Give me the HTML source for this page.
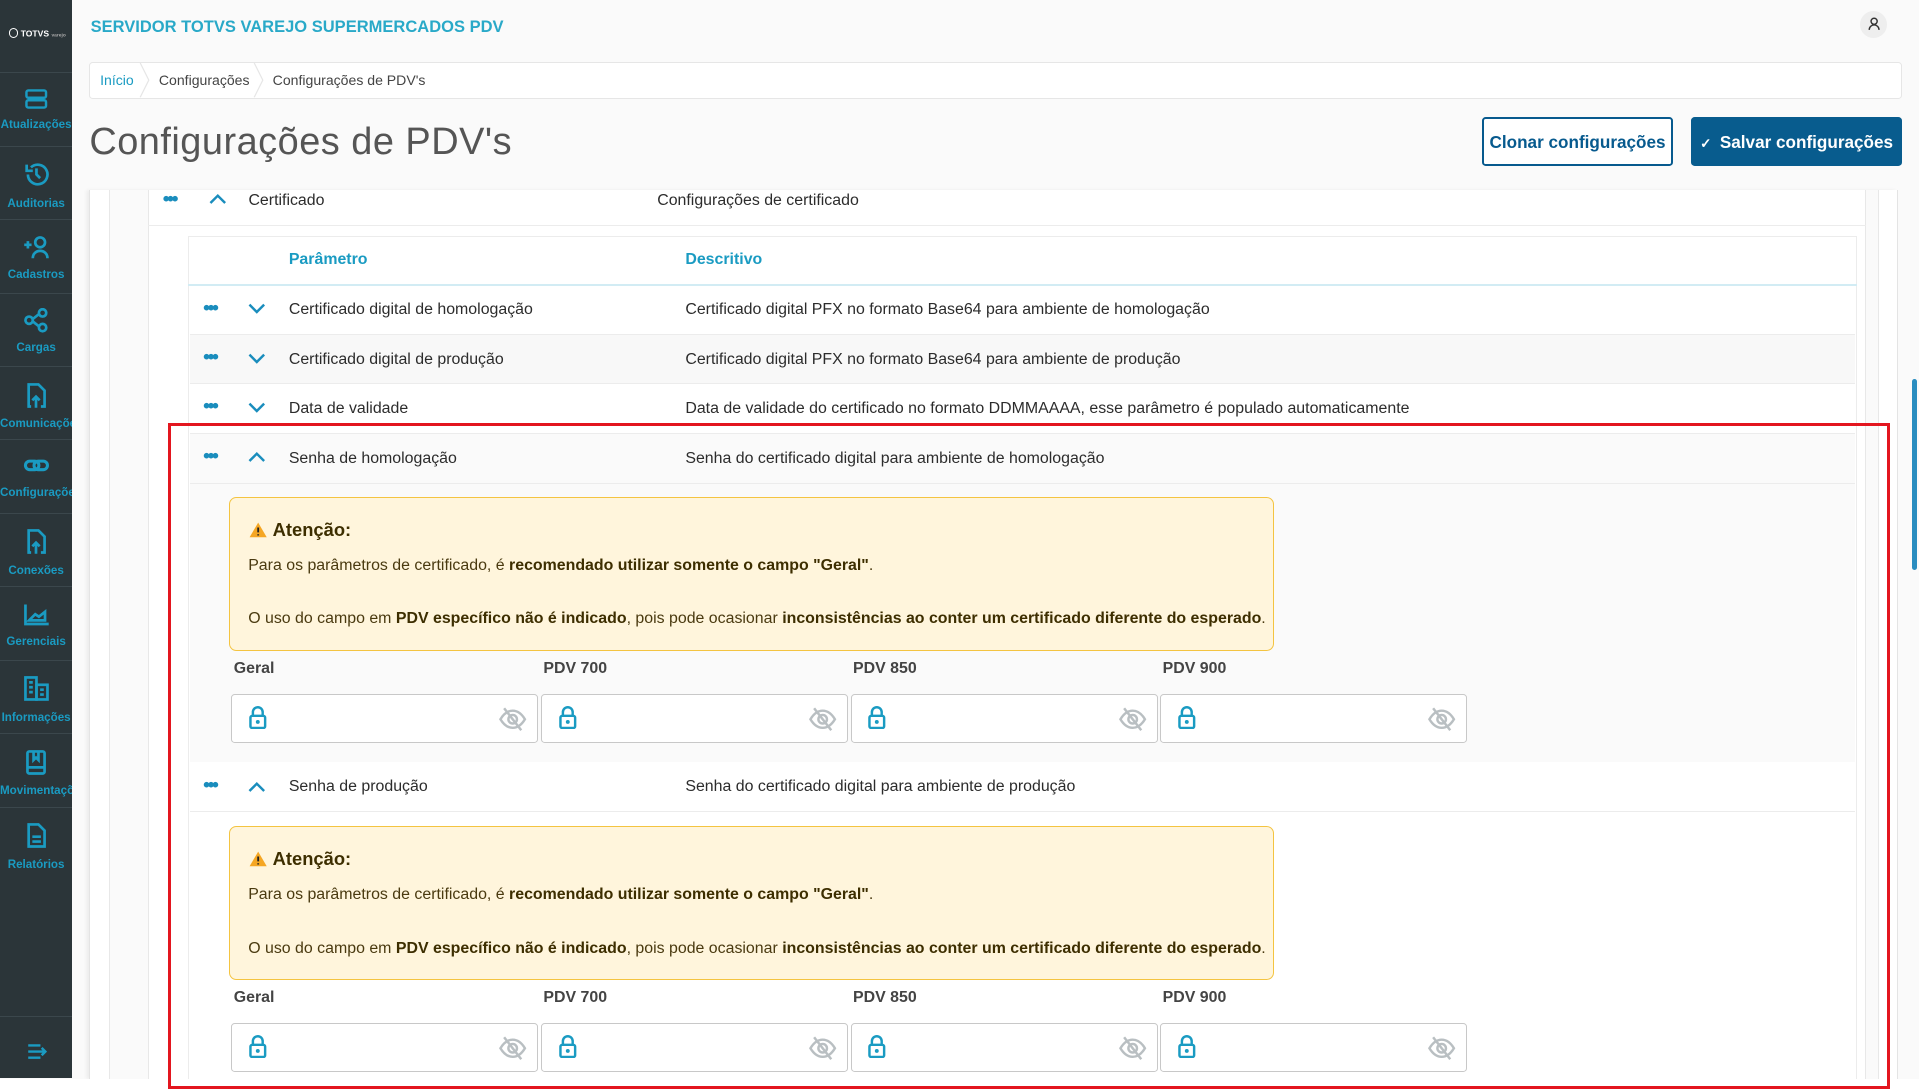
<!DOCTYPE html>
<html><head><meta charset="utf-8">
<style>
*{box-sizing:border-box;margin:0;padding:0}
html,body{width:1919px;height:1091px;overflow:hidden;background:#fff}
#w{position:absolute;left:0;top:0;width:1568px;height:891px;zoom:1.22385;font-family:"Liberation Sans",sans-serif;color:#2c2c2c;background:#fafafa}
.a{position:absolute}
#sb{left:0;top:0;width:59px;height:881px;background:#2b3539}
.si{position:absolute;left:0;width:59px;height:60px;border-top:1px solid #3b474c;text-align:center;color:#1a9bc2;font-size:9.5px;font-weight:bold;white-space:nowrap;overflow:hidden}
.si svg{display:block;margin:12px auto 7px}
.t{font-size:13px;white-space:nowrap}
.dots{font-size:16px;line-height:16px;color:#1a8dbd;font-weight:bold;letter-spacing:-2px}
.lbl{font-size:13px;font-weight:bold;color:#444}
.inp{position:absolute;height:40px;width:251px;border:1px solid #c8c8c8;border-radius:3px;background:#fff}
.inp .lk{position:absolute;left:13px;top:9px}
.inp .ey{position:absolute;right:8px;top:10px}
.alert{position:absolute;left:187px;width:854px;height:126px;background:#fff5dc;border:1px solid #f4c441;border-radius:6px;color:#4a3a10;font-size:13px}
.alert b{color:#3d2e00}
.alert .h{position:absolute;left:16px;top:17px;font-size:15px;font-weight:bold;color:#3d2e00}
.alert .h svg{vertical-align:-2px;margin-right:4px}
.alert .p1{position:absolute;left:15px;top:48px}
.alert .p2{position:absolute;left:15px;top:92px}
</style></head><body>
<div id="w">
<div id="sb" class="a">
 <div class="a" style="left:7px;top:23px;color:#fff;font-size:7px;font-weight:bold;white-space:nowrap"><span style="display:inline-block;width:8px;height:8px;border:1.5px solid #fff;border-radius:50%;vertical-align:-1px"></span> TOTVS <span style="font-size:4px;color:#aaa">varejo</span></div>
 <div class="si" style="top:59px"><svg width="20" height="18" viewBox="0 0 20 18" fill="none" stroke="#1a9bc2" stroke-width="2"><rect x="2" y="2" width="16" height="6" rx="1.5"/><rect x="2" y="10" width="16" height="6" rx="1.5"/></svg>Atualizações</div>
 <div class="si" style="top:119px"><svg width="22" height="22" viewBox="0 0 22 22" fill="none" stroke="#1a9bc2" stroke-width="2.2"><path d="M4 11a8 8 0 1 0 2.5-5.8M3 3v5h5"/><path d="M11 6v5l3 3"/></svg>Auditorias</div>
 <div class="si" style="top:179px"><svg width="22" height="20" viewBox="0 0 22 20" fill="none" stroke="#1a9bc2" stroke-width="2.2"><path d="M1 8h6M4 5v6"/><circle cx="14" cy="6" r="4"/><path d="M8 19c0-4 3-6 6-6s6 2 6 6"/></svg>Cadastros</div>
 <div class="si" style="top:239px"><svg width="22" height="20" viewBox="0 0 22 20" fill="none" stroke="#1a9bc2" stroke-width="2.2"><circle cx="5" cy="10" r="3"/><circle cx="16" cy="4" r="3"/><circle cx="16" cy="16" r="3"/><path d="M8 9l5-4M8 11l5 4"/></svg>Cargas</div>
 <div class="si" style="top:299px"><svg width="18" height="22" viewBox="0 0 18 22" fill="none" stroke="#1a9bc2" stroke-width="2.2"><path d="M5 20H3V2h8l5 5v13h-3"/><path d="M9 21v-9M6 15l3-3 3 3"/></svg>Comunicações</div>
 <div class="si" style="top:359px"><svg width="22" height="18" viewBox="0 0 22 18" fill="none" stroke="#1a9bc2" stroke-width="2.5"><rect x="2" y="5" width="11" height="7" rx="3.5"/><rect x="9" y="5" width="11" height="7" rx="3.5"/></svg>Configurações</div>
 <div class="si" style="top:419px"><svg width="18" height="22" viewBox="0 0 18 22" fill="none" stroke="#1a9bc2" stroke-width="2.2"><path d="M5 20H3V2h8l5 5v13h-3"/><path d="M9 21v-9M6 15l3-3 3 3"/></svg>Conexões</div>
 <div class="si" style="top:479px"><svg width="22" height="20" viewBox="0 0 22 20" fill="none" stroke="#1a9bc2" stroke-width="2.2"><path d="M2 2v16h19"/><path d="M5 15l5-5 3 2 5-4v7H5z"/></svg>Gerenciais</div>
 <div class="si" style="top:539px"><svg width="22" height="22" viewBox="0 0 22 22" fill="none" stroke="#1a9bc2" stroke-width="2.2"><rect x="2" y="2" width="9" height="18"/><rect x="11" y="8" width="9" height="12"/><path d="M5 6h3M5 10h3M5 14h3M14 12h3M14 16h3"/></svg>Informações</div>
 <div class="si" style="top:599px"><svg width="18" height="22" viewBox="0 0 18 22" fill="none" stroke="#1a9bc2" stroke-width="2.2"><rect x="2" y="2" width="14" height="18" rx="1.5"/><path d="M7 2v7l2-2 2 2V2M2 15h14"/></svg>Movimentações</div>
 <div class="si" style="top:659px"><svg width="18" height="22" viewBox="0 0 18 22" fill="none" stroke="#1a9bc2" stroke-width="2.2"><path d="M3 2h8l5 5v13H3z"/><path d="M6 12h7M6 16h7"/></svg>Relatórios</div>
 <div class="a" style="left:0;top:830px;width:59px;border-top:1px solid #3b474c"></div>
 <svg class="a" style="left:22px;top:852px" width="18" height="14" viewBox="0 0 18 14" fill="none" stroke="#1a9bc2" stroke-width="2"><path d="M1 2h10M1 7h14M1 12h10M12 4l3 3-3 3"/></svg>
</div>

<div class="a" style="left:74px;top:14px;font-size:13.5px;font-weight:bold;color:#29a9c8;white-space:nowrap">SERVIDOR TOTVS VAREJO SUPERMERCADOS PDV</div>
<div class="a" style="left:1520px;top:9px;width:22px;height:22px;border-radius:50%;background:#eee"><svg style="position:absolute;left:6px;top:5px" width="10" height="11" viewBox="0 0 10 11" fill="none" stroke="#333" stroke-width="1.2"><circle cx="5" cy="3.5" r="2.5"/><path d="M1 10.5c0-2.5 2-4 4-4s4 1.5 4 4"/></svg></div>

<div class="a" style="left:73px;top:51px;width:1481px;height:30px;background:#fff;border:1px solid #e6e6e6;border-radius:3px">
 <span class="a t" style="left:8px;top:7px;font-size:11.5px;color:#1a9bc2">Início</span>
 <svg class="a" style="left:40px;top:0" width="10" height="28"><path d="M1 0l7 14-7 14" fill="none" stroke="#e6e6e6"/></svg>
 <span class="a t" style="left:56px;top:7px;font-size:11.5px;color:#444">Configurações</span>
 <svg class="a" style="left:133px;top:0" width="10" height="28"><path d="M1 0l7 14-7 14" fill="none" stroke="#e6e6e6"/></svg>
 <span class="a t" style="left:149px;top:7px;font-size:11.5px;color:#444">Configurações de PDV's</span>
</div>

<div class="a" style="left:73px;top:99px;font-size:31px;color:#555;white-space:nowrap;letter-spacing:.4px">Configurações de PDV's</div>
<div class="a" style="left:1211px;top:96px;width:156px;height:40px;border:2px solid #075a8e;border-radius:3px;background:#fff;color:#075a8e;font-weight:bold;font-size:14px;text-align:center;line-height:38px">Clonar configurações</div>
<div class="a" style="left:1382px;top:96px;width:172px;height:40px;border-radius:3px;background:#085c8e;color:#fff;font-weight:bold;font-size:14px;text-align:center;line-height:41px"><span style="font-size:11px;margin-right:3px">✓</span> Salvar configurações</div>

<!-- content -->
<div class="a" style="left:73px;top:155px;width:1478px;height:727px;background:#fff;border-left:1px solid #e4e4e4;border-right:1px solid #e4e4e4;box-shadow:-2px 0 3px rgba(0,0,0,.06)"></div>
<div class="a" style="left:89px;top:155px;width:1446px;height:727px;background:#fafafa;border-left:1px solid #e8e8e8;border-right:1px solid #e8e8e8"></div>
<div class="a" style="left:121px;top:155px;width:1404px;height:727px;background:#fff;border-left:1px solid #e8e8e8;border-right:1px solid #e8e8e8"></div>
<div class="a" style="left:121px;top:184px;width:1404px;border-top:1px solid #ececec"></div>
<span class="a dots" style="left:133px;top:155px">•••</span>
<svg class="a" style="left:170px;top:157px" width="16" height="12"><path d="M2 9l6-6 6 6" fill="none" stroke="#1a8dbd" stroke-width="2"/></svg>
<span class="a t" style="left:203px;top:157px">Certificado</span>
<span class="a t" style="left:537px;top:157px">Configurações de certificado</span>

<div class="a" style="left:154px;top:193px;width:1363px;height:689px;background:#fff;border:1px solid #ececec;border-bottom:none"></div>
<div class="a" style="left:154px;top:232px;width:1363px;border-top:2px solid #d2ecf4"></div>
<span class="a t" style="left:236px;top:205px;color:#1a9bc2;font-weight:bold">Parâmetro</span>
<span class="a t" style="left:560px;top:205px;color:#1a9bc2;font-weight:bold">Descritivo</span>

<!-- rows -->
<div class="a" style="left:155px;top:234px;width:1361px;height:40px;background:#fff;border-bottom:1px solid #ececec"></div>
<div class="a" style="left:155px;top:274px;width:1361px;height:40px;background:#f8f8f8;border-bottom:1px solid #ececec"></div>
<div class="a" style="left:155px;top:314px;width:1361px;height:41px;background:#fff;border-bottom:1px solid #ececec"></div>
<div class="a" style="left:155px;top:355px;width:1361px;height:268px;background:#fafafa"></div>
<div class="a" style="left:155px;top:395px;width:1361px;border-top:1px solid #ececec"></div>
<div class="a" style="left:155px;top:663px;width:1361px;border-top:1px solid #ececec"></div>

<span class="a dots" style="left:166px;top:244px">•••</span>
<svg class="a" style="left:202px;top:246px" width="16" height="12"><path d="M2 3l6 6 6-6" fill="none" stroke="#1a8dbd" stroke-width="2"/></svg>
<span class="a t" style="left:236px;top:246px">Certificado digital de homologação</span>
<span class="a t" style="left:560px;top:246px">Certificado digital PFX no formato Base64 para ambiente de homologação</span>

<span class="a dots" style="left:166px;top:284px">•••</span>
<svg class="a" style="left:202px;top:287px" width="16" height="12"><path d="M2 3l6 6 6-6" fill="none" stroke="#1a8dbd" stroke-width="2"/></svg>
<span class="a t" style="left:236px;top:287px">Certificado digital de produção</span>
<span class="a t" style="left:560px;top:287px">Certificado digital PFX no formato Base64 para ambiente de produção</span>

<span class="a dots" style="left:166px;top:324px">•••</span>
<svg class="a" style="left:202px;top:327px" width="16" height="12"><path d="M2 3l6 6 6-6" fill="none" stroke="#1a8dbd" stroke-width="2"/></svg>
<span class="a t" style="left:236px;top:327px">Data de validade</span>
<span class="a t" style="left:560px;top:327px">Data de validade do certificado no formato DDMMAAAA, esse parâmetro é populado automaticamente</span>

<span class="a dots" style="left:166px;top:365px">•••</span>
<svg class="a" style="left:202px;top:368px" width="16" height="12"><path d="M2 9l6-6 6 6" fill="none" stroke="#1a8dbd" stroke-width="2"/></svg>
<span class="a t" style="left:236px;top:368px">Senha de homologação</span>
<span class="a t" style="left:560px;top:368px">Senha do certificado digital para ambiente de homologação</span>

<div class="alert" style="top:406px"><div class="h"><svg width="15" height="13" viewBox="0 0 15 13"><path d="M7.5 0.5L14.5 12.5H0.5z" fill="#f5a623"/><path d="M7.5 4.5v4M7.5 10v1" stroke="#222" stroke-width="1.5"/></svg>Atenção:</div>
<div class="p1">Para os parâmetros de certificado, é <b>recomendado utilizar somente o campo "Geral"</b>.</div>
<div class="p2">O uso do campo em <b>PDV específico não é indicado</b>, pois pode ocasionar <b>inconsistências ao conter um certificado diferente do esperado</b>.</div></div>
<span class="a lbl" style="left:191px;top:539px">Geral</span>
<span class="a lbl" style="left:444px;top:539px">PDV 700</span>
<span class="a lbl" style="left:697px;top:539px">PDV 850</span>
<span class="a lbl" style="left:950px;top:539px">PDV 900</span>
<div class="inp" style="left:189px;top:567px"></div>
<div class="inp" style="left:442px;top:567px"></div>
<div class="inp" style="left:695px;top:567px"></div>
<div class="inp" style="left:948px;top:567px"></div>

<span class="a dots" style="left:166px;top:634px">•••</span>
<svg class="a" style="left:202px;top:637px" width="16" height="12"><path d="M2 9l6-6 6 6" fill="none" stroke="#1a8dbd" stroke-width="2"/></svg>
<span class="a t" style="left:236px;top:636px">Senha de produção</span>
<span class="a t" style="left:560px;top:636px">Senha do certificado digital para ambiente de produção</span>

<div class="alert" style="top:675px"><div class="h"><svg width="15" height="13" viewBox="0 0 15 13"><path d="M7.5 0.5L14.5 12.5H0.5z" fill="#f5a623"/><path d="M7.5 4.5v4M7.5 10v1" stroke="#222" stroke-width="1.5"/></svg>Atenção:</div>
<div class="p1">Para os parâmetros de certificado, é <b>recomendado utilizar somente o campo "Geral"</b>.</div>
<div class="p2">O uso do campo em <b>PDV específico não é indicado</b>, pois pode ocasionar <b>inconsistências ao conter um certificado diferente do esperado</b>.</div></div>
<span class="a lbl" style="left:191px;top:808px">Geral</span>
<span class="a lbl" style="left:444px;top:808px">PDV 700</span>
<span class="a lbl" style="left:697px;top:808px">PDV 850</span>
<span class="a lbl" style="left:950px;top:808px">PDV 900</span>
<div class="inp" style="left:189px;top:836px"></div>
<div class="inp" style="left:442px;top:836px"></div>
<div class="inp" style="left:695px;top:836px"></div>
<div class="inp" style="left:948px;top:836px"></div>

<div class="a" style="left:1562px;top:310px;width:4px;height:156px;background:#2a8dc0;border-radius:2px"></div>
<div class="a" style="left:0;top:882px;width:1568px;height:10px;background:#fff"></div>
<div class="a" style="left:137px;top:346px;width:1407px;height:544px;border:2.5px solid #e3161f"></div>
</div>
<script>
var L='<svg width="16" height="19" viewBox="0 0 16 19" fill="none" stroke="#1a9bc2" stroke-width="2"><path d="M4 8V5a4 4 0 0 1 8 0v3"/><rect x="2" y="8" width="12" height="10" rx="1.5"/><circle cx="8" cy="13" r=".6" fill="#1a9bc2"/></svg>';
var E='<svg width="24" height="20" viewBox="0 0 24 20" fill="none" stroke="#b9bfc2" stroke-width="2"><path d="M2 10c3-5 6-7 10-7s7 2 10 7c-3 5-6 7-10 7S5 15 2 10z"/><circle cx="12" cy="10" r="3.5"/><path d="M5 1l14 18"/></svg>';
document.querySelectorAll('.inp').forEach(function(e){e.innerHTML='<span class="lk">'+L+'</span><span class="ey">'+E+'</span>';});
</script>
</body></html>
